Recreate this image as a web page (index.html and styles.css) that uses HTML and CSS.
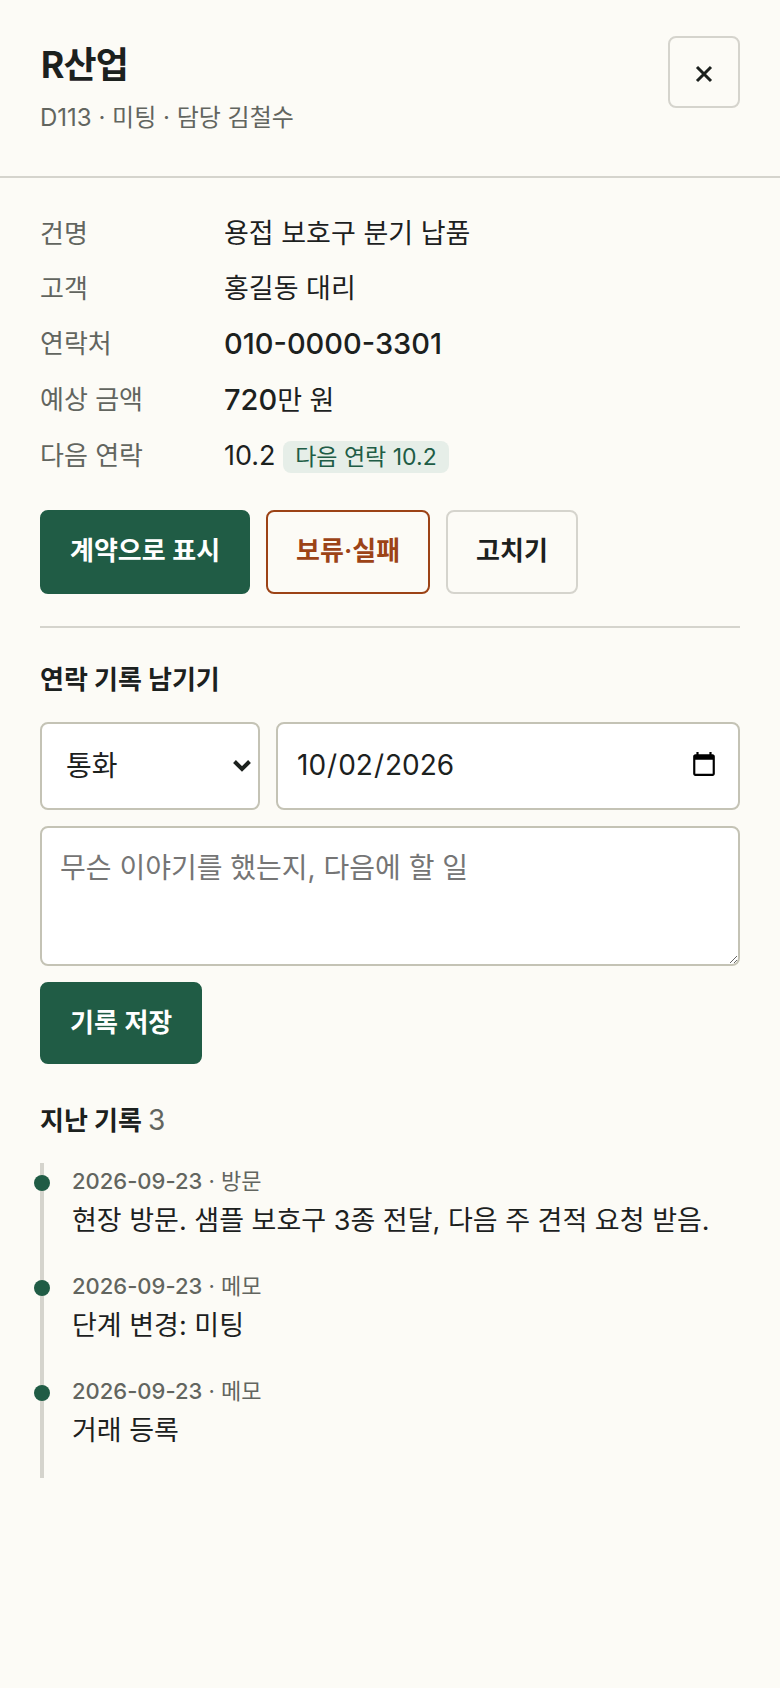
FILE: index.html
```
<!DOCTYPE html>
<html lang="ko">
<head>
<meta charset="UTF-8">
<meta name="viewport" content="width=device-width, initial-scale=1">
<title>R산업</title>
<link rel="stylesheet" href="styles.css">
</head>
<body>
<header class="head">
  <div>
    <h1>R산업</h1>
    <p class="sub">D113 · 미팅 · 담당 김철수</p>
  </div>
  <button type="button" class="btn close" aria-label="닫기">
    <svg width="18" height="18" viewBox="0 0 18 18" aria-hidden="true"><path d="M2 2l14 14M16 2L2 16" stroke="currentColor" stroke-width="3" fill="none"/></svg>
  </button>
</header>

<main class="body">
  <dl class="info">
    <dt>건명</dt><dd>용접 보호구 분기 납품</dd>
    <dt>고객</dt><dd>홍길동 대리</dd>
    <dt>연락처</dt><dd><span class="num">010-0000-3301</span></dd>
    <dt>예상 금액</dt><dd><span class="num">720</span>만 원</dd>
    <dt>다음 연락</dt><dd>10.2 <span class="badge">다음 연락 10.2</span></dd>
  </dl>

  <div class="actions">
    <button type="button" class="btn primary">계약으로 표시</button>
    <button type="button" class="btn danger">보류·실패</button>
    <button type="button" class="btn">고치기</button>
  </div>

  <form class="log-form">
    <h2>연락 기록 남기기</h2>
    <div class="row">
      <select class="field kind" aria-label="종류">
        <option>통화</option>
        <option>방문</option>
        <option>메모</option>
      </select>
      <input class="field date" type="date" value="2026-10-02" aria-label="날짜">
    </div>
    <textarea class="field note" aria-label="내용" placeholder="무슨 이야기를 했는지, 다음에 할 일"></textarea>
    <button type="button" class="btn primary save">기록 저장</button>
  </form>

  <section>
    <h2>지난 기록 <span class="count">3</span></h2>
    <ol class="timeline">
      <li>
        <div class="meta"><time>2026-09-23</time> · 방문</div>
        <p>현장 방문. 샘플 보호구 3종 전달, 다음 주 견적 요청 받음.</p>
      </li>
      <li>
        <div class="meta"><time>2026-09-23</time> · 메모</div>
        <p>단계 변경: 미팅</p>
      </li>
      <li>
        <div class="meta"><time>2026-09-23</time> · 메모</div>
        <p>거래 등록</p>
      </li>
    </ol>
  </section>
</main>
</body>
</html>
```
FILE: styles.css
```
:root {
  --bg: #fcfbf6;
  --ink: #1c211e;
  --muted: #62655f;
  --line: #d5d4cd;
  --field-line: #c4c3b5;
  --green: #205c45;
  --rust: #9c4316;
}
* {
  box-sizing: border-box;
}
body {
  margin: 0;
  background: var(--bg);
  color: var(--ink);
  font-family: Inter, "Noto Sans CJK KR", sans-serif;
  font-size: 26px;
  line-height: 40px;
}
h1, h2, p, dl, dd, ol {
  margin: 0;
}
.head {
  display: flex;
  justify-content: space-between;
  align-items: flex-start;
  padding: 36px 40px;
  border-bottom: 2px solid var(--line);
}
h1 {
  font-family: "Noto Sans CJK KR", sans-serif;
  font-size: 36px;
  line-height: 52px;
  letter-spacing: -1px;
}
.sub {
  padding-top: 8px;
  color: var(--muted);
  font-size: 24px;
  line-height: 44px;
}
.body {
  padding: 36px 40px;
}

.info {
  display: grid;
  grid-template-columns: 168px 1fr;
  gap: 15px 16px;
}
.info dt {
  color: var(--muted);
}
.info dd {
  font-size: 27px;
}
.info .num {
  font-size: 29px;
  font-weight: 500;
}
.badge {
  display: inline-block;
  padding: 0 12px;
  border-radius: 8px;
  background: #e6eee8;
  color: var(--green);
  font-size: 23px;
  line-height: 32px;
}

.btn {
  padding: 21px 28px 23px;
  border: 2px solid var(--line);
  border-radius: 8px;
  background: transparent;
  color: var(--ink);
  font: 600 26px/36px Inter, "Noto Sans CJK KR", sans-serif;
  cursor: pointer;
}
.btn.primary {
  border-color: var(--green);
  background: var(--green);
  color: #fff;
}
.btn.danger {
  border-color: var(--rust);
  color: var(--rust);
}
.btn.close {
  display: flex;
  align-items: center;
  justify-content: center;
  width: 72px;
  height: 72px;
  padding: 4px 0 0;
}
.actions {
  display: flex;
  gap: 16px;
  padding: 34px 0 32px;
  border-bottom: 2px solid var(--line);
}

h2 {
  font-size: 26px;
  line-height: 40px;
}
.log-form {
  display: flex;
  flex-direction: column;
  align-items: flex-start;
  gap: 16px;
  padding: 32px 0 36px;
}
.log-form h2 {
  margin-bottom: 6px;
}
.row {
  display: flex;
  gap: 16px;
  width: 100%;
}
.field {
  border: 2px solid var(--field-line);
  border-radius: 8px;
  background: #fff;
  color: var(--ink);
  font: 28px/40px Inter, "Noto Sans CJK KR", sans-serif;
}
.kind {
  width: 220px;
  height: 88px;
  padding: 0 24px;
  appearance: none;
  background: #fff url("data:image/svg+xml,%3Csvg xmlns='http://www.w3.org/2000/svg' width='18' height='12' viewBox='0 0 18 12'%3E%3Cpath d='M1.5 1.5L9 9l7.5-7.5' fill='none' stroke='%231c211e' stroke-width='4'/%3E%3C/svg%3E") no-repeat right 7px center;
}
.date {
  flex: 1;
  min-width: 0;
  height: 88px;
  padding: 0 18px 2px;
}
.note {
  width: 100%;
  height: 140px;
  padding: 20px 18px;
  resize: vertical;
}
.note::placeholder {
  color: #757575;
}
.save {
  height: 82px;
}

.count {
  color: var(--muted);
  font-size: 28px;
  font-weight: 400;
}
.timeline {
  margin-top: 22px;
  padding: 0;
  border-left: 4px solid var(--line);
  list-style: none;
}
.timeline li {
  position: relative;
  padding: 0 0 26px 28px;
}
.timeline li::before {
  content: "";
  position: absolute;
  left: -10px;
  top: 12px;
  width: 16px;
  height: 16px;
  border-radius: 50%;
  background: var(--green);
}
.timeline p {
  font-size: 27px;
  line-height: 42px;
}
.meta {
  color: var(--muted);
  font-size: 22px;
  line-height: 37px;
}
.meta time {
  font-weight: 500;
}
```
